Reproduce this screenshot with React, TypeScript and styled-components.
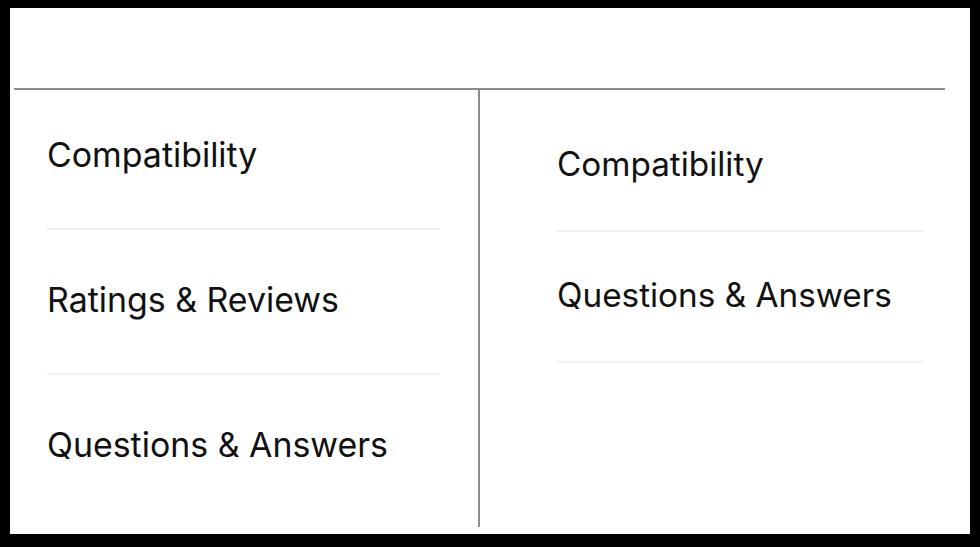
import styled, {createGlobalStyle} from "styled-components";

const GlobalStyle = createGlobalStyle`
  html, body {
    margin: 0;
    padding: 0;
    background: #000;
  }
  body {
    font-family: Inter, "Noto Sans", "Liberation Sans", sans-serif;
  }
`

type RowSpec = {
    label: string;
    top: number;
    height: number;
    divider: boolean;
}

const leftRows: RowSpec[] = [
    {label: "Compatibility", top: 48, height: 138, divider: true},
    {label: "Ratings & Reviews", top: 53, height: 143, divider: true},
    {label: "Questions & Answers", top: 53, height: 143, divider: false},
];

const rightRows: RowSpec[] = [
    {label: "Compatibility", top: 58, height: 140, divider: true},
    {label: "Questions & Answers", top: 47, height: 129, divider: true},
];

const Screen = styled.div`
  width: 980px;
  height: 547px;
  box-sizing: border-box;
  padding: 8px 10px 13px 10px;
  background: #000;
  display: flex;
`

const Panel = styled.div`
  flex: 1;
  display: flex;
  flex-direction: column;
  padding: 80px 25px 7px 4px;
  background: #fff;
`

const Table = styled.div`
  flex: 1;
  display: grid;
  grid-template-columns: 466px 1fr;
  border-top: 2px solid #8c8c8c;
`

const Column = styled.div<{ $left: number; $right: number; $divider?: boolean }>`
  display: flex;
  flex-direction: column;
  padding: 0 ${p => p.$right}px 0 ${p => p.$left}px;
  border-right: ${p => p.$divider ? "2px solid #8c8c8c" : "none"};
`

const Row = styled.div<{ $top: number; $height: number; $divider: boolean }>`
  box-sizing: content-box;
  height: ${p => p.$height - p.$top}px;
  padding-top: ${p => p.$top}px;
  border-bottom: 2px solid ${p => p.$divider ? "#efefef" : "transparent"};
`

const Label = styled.span<{ $size: number }>`
  display: block;
  font-size: ${p => p.$size}px;
  line-height: 1;
  font-weight: 400;
  color: #111;
  white-space: nowrap;
`

export default function App() {
    return (
        <Screen>
            <GlobalStyle/>
            <Panel>
                <Table>
                    <Column $left={33} $right={38} $divider>
                        {leftRows.map(row => (
                            <Row key={row.label} $top={row.top} $height={row.height} $divider={row.divider}>
                                <Label $size={33.9}>{row.label}</Label>
                            </Row>
                        ))}
                    </Column>
                    <Column $left={77} $right={22}>
                        {rightRows.map(row => (
                            <Row key={row.label} $top={row.top} $height={row.height} $divider={row.divider}>
                                <Label $size={33.3}>{row.label}</Label>
                            </Row>
                        ))}
                    </Column>
                </Table>
            </Panel>
        </Screen>
    );
}
